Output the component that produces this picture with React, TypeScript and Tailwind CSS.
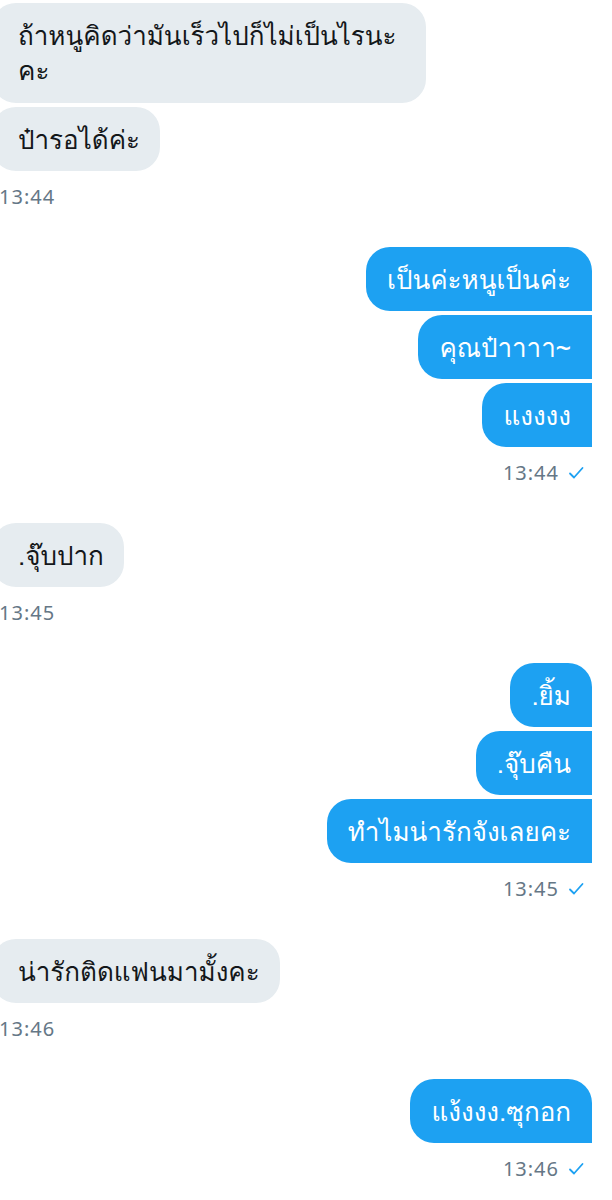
import React from "react";

type Msg = { text: React.ReactNode; w?: string; h?: string };

const FONT = "font-['Loma',sans-serif]";
const TIME = "font-['Noto_Sans',sans-serif] text-[#657786] text-[20px] leading-[24px] tracking-[1px]";

function Check() {
  return (
    <svg width="16" height="16" viewBox="0 0 16 16" className="ml-[9px]">
      <path d="M2 8.5 L6 12.5 L14.5 3" fill="none" stroke="#1da1f2" strokeWidth="1.8" strokeLinecap="round" strokeLinejoin="round" />
    </svg>
  );
}

function Received({ msgs, time }: { msgs: Msg[]; time: string }) {
  return (
    <div className="flex flex-col items-start gap-[4px] -ml-[8px]">
      {msgs.map((m, i) => (
        <div
          key={i}
          className={`flex items-center bg-[#e6ecf0] text-[#14171a] text-[26px] leading-[35px] pl-[26px] pr-[20px] rounded-[24px] ${m.h ?? "h-[64px]"} ${m.w ?? ""}`}
        >
          <div>{m.text}</div>
        </div>
      ))}
      <div className={`${TIME} mt-[10px] ml-[7px]`}>{time}</div>
    </div>
  );
}

function Sent({ msgs, time }: { msgs: Msg[]; time: string }) {
  return (
    <div className="flex flex-col items-end gap-[4px] mr-[20px]">
      {msgs.map((m, i) => (
        <div
          key={i}
          className={`flex items-center h-[64px] bg-[#1da1f2] text-white text-[26px] leading-[35px] px-[21px] rounded-[24px] rounded-br-none ${i > 0 ? "rounded-tr-none" : ""}`}
        >
          {m.text}
        </div>
      ))}
      <div className={`flex items-center ${TIME} mt-[10px] mr-[8px]`}>
        {time}
        <Check />
      </div>
    </div>
  );
}

export default function App() {
  return (
    <div className={`w-[612px] h-[1200px] bg-white overflow-hidden ${FONT} pt-[3px] flex flex-col`}>
      <Received
        msgs={[
          {
            text: (
              <>
                <div className="h-[35px]">ถ้าหนูคิดว่ามันเร็วไปก็ไม่เป็นไรนะ</div>
                <div className="h-[35px]">คะ</div>
              </>
            ),
            w: "w-[434px]",
            h: "h-[100px]",
          },
          { text: "ป๋ารอได้ค่ะ" },
        ]}
        time="13:44"
      />
      <div className="h-[38px]" />
      <Sent
        msgs={[{ text: "เป็นค่ะหนูเป็นค่ะ" }, { text: "คุณป๋าาาา~" }, { text: "แงงงง" }]}
        time="13:44"
      />
      <div className="h-[38px]" />
      <Received msgs={[{ text: ".จุ๊บปาก" }]} time="13:45" />
      <div className="h-[38px]" />
      <Sent
        msgs={[{ text: ".ยิ้ม" }, { text: ".จุ๊บคืน" }, { text: "ทำไมน่ารักจังเลยคะ" }]}
        time="13:45"
      />
      <div className="h-[38px]" />
      <Received msgs={[{ text: "น่ารักติดแฟนมามั้งคะ" }]} time="13:46" />
      <div className="h-[38px]" />
      <Sent msgs={[{ text: "แง้งงง.ซุกอก" }]} time="13:46" />
    </div>
  );
}
